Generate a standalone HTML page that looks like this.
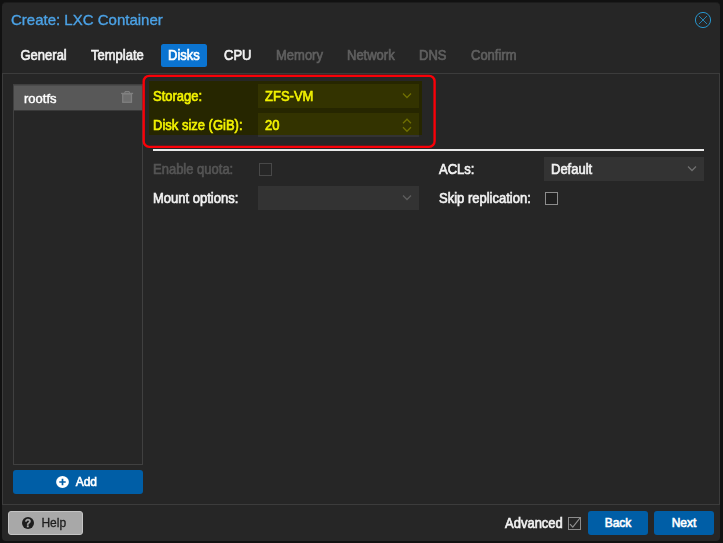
<!DOCTYPE html>
<html>
<head>
<meta charset="utf-8">
<title>Create: LXC Container</title>
<style>
html,body{margin:0;padding:0;}
body{width:723px;height:543px;background:#111;overflow:hidden;position:relative;font-family:"Liberation Sans",Arial,Helvetica,sans-serif;font-size:13px;color:#f2f2f2;}
.abs{position:absolute;}
#win{left:2px;top:2px;width:718px;height:539px;background:#262626;border-radius:4px;box-sizing:border-box;border-top:1px solid #1c1c1c;}
#title{left:11px;top:11px;font-size:15px;line-height:18px;color:#4ba2e6;white-space:nowrap;-webkit-text-stroke:0.35px currentColor;}
.tab{top:43px;transform:scaleY(1.075);transform-origin:0 7px;height:23px;line-height:23px;font-size:13px;white-space:nowrap;color:#f2f2f2;-webkit-text-stroke:0.6px currentColor;}
.tab.dis{color:#606060;}
#tabact{left:161px;top:44px;width:46px;height:23px;background:#0b74d1;border-radius:2.5px;}
#body{left:2px;top:73px;width:716px;height:430px;border:1px solid #3c3c3c;box-sizing:content-box;}
#list{left:13px;top:84px;width:128px;height:379px;border:1px solid #404040;}
#row{left:14px;top:85px;width:128px;height:24px;background:#585858;border-top:1px solid #4b4b4b;border-bottom:1px solid #3a3a3a;}
#rowtxt{left:24px;top:86px;line-height:26px;color:#fff;-webkit-text-stroke:0.45px currentColor;}
.btn{height:24px;line-height:24px;border-radius:3px;background:#005ea6;color:#fff;font-size:12px;text-align:center;-webkit-text-stroke:0.6px currentColor;}
.lbl{transform:scaleY(1.075);transform-origin:0 6.5px;font-size:13px;line-height:24px;white-space:nowrap;color:#f2f2f2;-webkit-text-stroke:0.6px currentColor;}
.fld{height:24px;background:#333;line-height:24px;}
.fld span{transform:scaleY(1.075);transform-origin:0 6.5px;position:absolute;left:7px;top:0;-webkit-text-stroke:0.6px currentColor;}
.cb{width:11px;height:11px;border:1px solid #8c8c8c;}
</style>
</head>
<body>
<div id="win" class="abs"></div>
<div id="title" class="abs">Create: LXC Container</div>
<svg class="abs" style="left:693px;top:10px" width="20" height="20" viewBox="0 0 20 20"><circle cx="10" cy="10" r="7.6" fill="none" stroke="#2794cb" stroke-width="1"/><path d="M6 6 L14 14 M14 6 L6 14" stroke="#2794cb" stroke-width="0.85" fill="none"/></svg>

<div id="tabact" class="abs"></div>
<div class="abs tab" style="left:20.5px">General</div>
<div class="abs tab" style="left:91px">Template</div>
<div class="abs tab" style="left:168px;color:#fff">Disks</div>
<div class="abs tab" style="left:224px">CPU</div>
<div class="abs tab dis" style="left:276px">Memory</div>
<div class="abs tab dis" style="left:347px">Network</div>
<div class="abs tab dis" style="left:419px">DNS</div>
<div class="abs tab dis" style="left:471px">Confirm</div>

<div id="body" class="abs"></div>

<div id="list" class="abs"></div>
<div id="row" class="abs"></div>
<div id="rowtxt" class="abs">rootfs</div>
<svg class="abs" style="left:120px;top:90px" width="14" height="14" viewBox="120 90 14 14"><path d="M124.6 93 L125.4 91.6 H128.9 L129.7 93" fill="none" stroke="#808080" stroke-width="1.1"/><rect x="121.1" y="92.8" width="12" height="1.3" fill="#808080"/><rect x="122.7" y="94" width="8.8" height="8.3" fill="#6f6f6f" stroke="#808080" stroke-width="1.2"/></svg>

<div class="abs btn" style="left:13px;top:470px;width:130px;"></div>
<svg class="abs" style="left:55px;top:475px" width="15" height="14" viewBox="55 475 15 14"><ellipse cx="62.5" cy="482" rx="6.4" ry="6.1" fill="#fff"/><path d="M62.5 478.8 V485.2 M59.3 482 H65.7" stroke="#005ea6" stroke-width="1.7"/></svg>
<div class="abs" style="left:75.7px;top:470px;line-height:24px;font-size:12px;color:#fff;-webkit-text-stroke:0.6px #fff;">Add</div>

<!-- form -->
<div class="abs lbl" style="left:153px;top:84px">Storage:</div>
<div class="abs fld" style="left:258px;top:84px;width:161px"><span>ZFS-VM</span></div>
<svg class="abs" style="left:402px;top:92px" width="10" height="7" viewBox="0 0 10 7"><path d="M1 1.5 L5 5.5 L9 1.5" stroke="#707070" stroke-width="1.25" fill="none"/></svg>
<div class="abs lbl" style="left:153px;top:113px">Disk size (GiB):</div>
<div class="abs fld" style="left:258px;top:113px;width:161px"><span>20</span></div>
<svg class="abs" style="left:402px;top:117px" width="10" height="16" viewBox="0 0 10 16"><path d="M1 6.2 L5 2.2 L9 6.2 M1 10.3 L5 14.3 L9 10.3" stroke="#707070" stroke-width="1.25" fill="none"/></svg>

<!-- highlight -->
<div class="abs" style="left:149px;top:81px;width:273px;height:54px;background:#ffff00;mix-blend-mode:multiply;"></div>
<svg class="abs" style="left:138px;top:70px" width="304" height="84" viewBox="138 70 304 84"><rect x="143.7" y="75.8" width="290.9" height="71" rx="5.5" ry="5.5" fill="none" stroke="#fa0008" stroke-width="2.35"/></svg>

<div class="abs" style="left:153px;top:149px;width:551px;height:2px;background:#e8e8e8;"></div>

<div class="abs lbl" style="left:153px;top:157px;color:#555">Enable quota:</div>
<div class="abs cb" style="left:259px;top:163px;border-color:#484848"></div>
<div class="abs lbl" style="left:439px;top:157px">ACLs:</div>
<div class="abs fld" style="left:544px;top:157px;width:160px"><span>Default</span></div>
<svg class="abs" style="left:687px;top:165px" width="10" height="7" viewBox="0 0 10 7"><path d="M1 1.5 L5 5.5 L9 1.5" stroke="#707070" stroke-width="1.25" fill="none"/></svg>

<div class="abs lbl" style="left:153px;top:186px">Mount options:</div>
<div class="abs fld" style="left:258px;top:186px;width:161px"></div>
<svg class="abs" style="left:402px;top:194px" width="10" height="7" viewBox="0 0 10 7"><path d="M1 1.5 L5 5.5 L9 1.5" stroke="#5e5e5e" stroke-width="1.25" fill="none"/></svg>
<div class="abs lbl" style="left:439px;top:186px">Skip replication:</div>
<div class="abs cb" style="left:545px;top:192px;background:#1f1f1f"></div>

<!-- bottom bar -->
<div class="abs" style="left:8px;top:511px;width:73px;height:22px;border:1px solid #c4c4c4;border-radius:3px;background:#a8a8a8;"></div>
<svg class="abs" style="left:22px;top:517px" width="12" height="12" viewBox="0 0 12 12"><circle cx="6" cy="6" r="6" fill="#1e1e1e"/><text x="6" y="9.6" font-family="Liberation Sans, sans-serif" font-weight="bold" font-size="10.5" text-anchor="middle" fill="#a8a8a8" stroke="#a8a8a8" stroke-width="0.3">?</text></svg>
<div class="abs" style="left:41.4px;top:511px;line-height:24px;font-size:12px;color:#1e1e1e;-webkit-text-stroke:0.3px #1e1e1e;">Help</div>

<div class="abs lbl" style="left:505px;top:511px;">Advanced</div>
<svg class="abs" style="left:568px;top:517px" width="14" height="14" viewBox="0 0 14 14"><rect x="0.5" y="0.5" width="12" height="12" fill="none" stroke="#8c8c8c"/><path d="M2 7.2 L4.8 10.2 L12 1" stroke="#909090" stroke-width="1.2" fill="none"/></svg>
<div class="abs btn" style="left:588px;top:511px;width:60px;">Back</div>
<div class="abs btn" style="left:654px;top:511px;width:60px;">Next</div>
</body>
</html>
